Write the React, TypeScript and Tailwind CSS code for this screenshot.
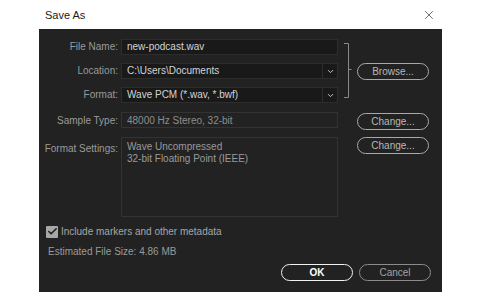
import { X, Check, ChevronDown } from "lucide-react";

const font = { fontFamily: '"Liberation Sans", Arial, sans-serif' };

const Label = ({ children, top }: { children: string; top?: boolean }) => (
  <div
    className={`pr-[3px] text-right text-[10px] text-[#9a9a9a] ${
      top ? "pt-[4px]" : "leading-4"
    }`}
  >
    {children}
  </div>
);

const Field = ({ value, select }: { value: string; select?: boolean }) => (
  <div className="flex h-4 items-stretch border border-[#2d2d2d] bg-[#191919]">
    <div className="flex-1 pl-[5px] text-[10px] leading-[14px] text-[#d4d4d4]">
      {value}
    </div>
    {select && (
      <div className="flex w-[15px] items-center justify-center border-l border-[#2d2d2d]">
        <ChevronDown size={9} strokeWidth={2.5} className="text-[#cfcfcf]" />
      </div>
    )}
  </div>
);

const Pill = ({
  children,
  tone = "grey",
  width = "w-[72px]",
}: {
  children: string;
  tone?: "grey" | "white" | "dim";
  width?: string;
}) => {
  const styles = {
    grey: "border-[#a9a9a9] text-[#b8b8b8]",
    white: "border-[#f2f2f2] text-white font-bold",
    dim: "border-[#8c8c8c] text-[#a3a3a3]",
  };
  return (
    <button
      className={`flex h-[17px] ${width} items-center justify-center rounded-full border-[1.5px] bg-transparent text-[10px] ${styles[tone]}`}
    >
      {children}
    </button>
  );
};

const Bracket = () => (
  <svg width="19" height="65" viewBox="0 0 19 65" className="row-span-3">
    <path
      d="M6 4.5 H10.5 V58.5 H6 M10.5 30.5 H13.5"
      fill="none"
      stroke="#8a8a8a"
      strokeWidth="1"
    />
  </svg>
);

export default function App() {
  return (
    <div className="h-[300px] w-[480px] bg-white" style={font}>
      <div className="flex h-[29px] items-center justify-between pl-[45px] pr-[44px] pt-[1px]">
        <span className="text-[11px] text-[#1a1a1a]">Save As</span>
        <X size={14} strokeWidth={1.2} className="text-[#333]" />
      </div>
      <div className="ml-[39px] flex h-[263px] w-[403px] flex-col bg-[#222222] pt-[10px]">
        <div className="grid grid-cols-[82px_217px_19px_72px] grid-rows-[16px_16px_17px_17px_80px] gap-y-2">
          <Label>File Name:</Label>
          <Field value="new-podcast.wav" />
          <Bracket />
          <div />

          <Label>Location:</Label>
          <Field value="C:\Users\Documents" select />
          <Pill>Browse...</Pill>

          <Label>Format:</Label>
          <Field value="Wave PCM (*.wav, *.bwf)" select />
          <div />

          <div className="pt-[1px]">
            <Label>Sample Type:</Label>
          </div>
          <div className="flex h-4 items-center border border-[#333] pl-[5px] text-[10px] text-[#8e8e8e]">
            48000 Hz Stereo, 32-bit
          </div>
          <div />
          <div className="pt-[1px]">
            <Pill>Change...</Pill>
          </div>

          <Label top>Format Settings:</Label>
          <div className="border border-[#333] pl-[5px] pt-[3px] text-[10px] leading-[12px] text-[#9a9a9a]">
            <div>Wave Uncompressed</div>
            <div>32-bit Floating Point (IEEE)</div>
          </div>
          <div />
          <Pill>Change...</Pill>
        </div>

        <div className="mt-[7px] flex items-center gap-[3px] pl-[7px]">
          <div className="flex h-[12px] w-[12px] items-center justify-center rounded-[1px] bg-[#a7a7a7]">
            <Check size={11} strokeWidth={3.5} className="text-[#1e1e1e]" />
          </div>
          <span className="text-[10px] text-[#a6a6a6]">
            Include markers and other metadata
          </span>
        </div>
        <div className="mt-[5px] pl-[9px] text-[10px] text-[#9a9a9a]">
          Estimated File Size: 4.86 MB
        </div>

        <div className="mt-[5px] flex gap-[6px] pl-[242px]">
          <Pill tone="white">OK</Pill>
          <Pill tone="dim">Cancel</Pill>
        </div>
      </div>
    </div>
  );
}
